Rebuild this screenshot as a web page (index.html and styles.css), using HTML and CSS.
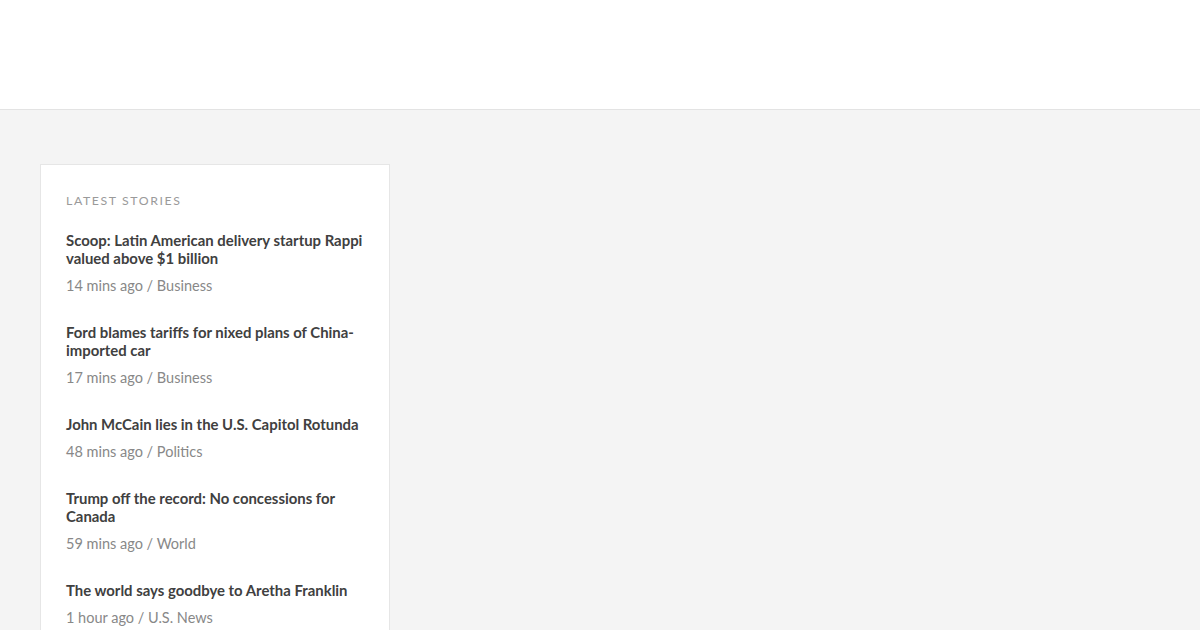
FILE: index.html
```html
<!DOCTYPE html>
<html lang="en">
<head>
<meta charset="UTF-8">
<title>Latest stories</title>
<link rel="stylesheet" href="styles.css">
</head>
<body>

<div class="header"></div>

<div class="main">
    <div class="card">
        <div class="card-title">LATEST STORIES</div>

        <div class="story">
            <div class="story-title">Scoop: Latin American delivery startup Rappi valued above $1 billion</div>
            <div class="story-meta">14 mins ago / Business</div>
        </div>

        <div class="story">
            <div class="story-title">Ford blames tariffs for nixed plans of China-imported car</div>
            <div class="story-meta">17 mins ago / Business</div>
        </div>

        <div class="story">
            <div class="story-title">John McCain lies in the U.S. Capitol Rotunda</div>
            <div class="story-meta">48 mins ago / Politics</div>
        </div>

        <div class="story">
            <div class="story-title">Trump off the record: No concessions for Canada</div>
            <div class="story-meta">59 mins ago / World</div>
        </div>

        <div class="story">
            <div class="story-title">The world says goodbye to Aretha Franklin</div>
            <div class="story-meta">1 hour ago / U.S. News</div>
        </div>
    </div>
</div>

</body>
</html>
```

FILE: styles.css
```css
body {
    font-family: Lato, "Liberation Sans", sans-serif;
    background: #f4f4f4;
    margin: 0;
    height: 630px;
    overflow: hidden;
}

.header {
    height: 109px;
    background: white;
    border-bottom: 1px solid #e3e3e3;
}

.main {
    padding: 54px 40px 0;
}

.card {
    width: 299px;
    background: white;
    border: 1px solid #e6e6e6;
    padding: 28px 24px 40px 25px;
}

.card-title {
    font-size: 12.3px;
    letter-spacing: 1.6px;
    color: #9a9a9a;
    line-height: 16px;
    margin-bottom: 22px;
}

.story {
    margin-bottom: 28px;
}

.story-title {
    font-size: 14.9px;
    font-weight: bold;
    color: #404040;
    line-height: 18px;
}

.story-meta {
    font-size: 14.5px;
    color: #888;
    line-height: 18px;
    margin-top: 10px;
}
```
